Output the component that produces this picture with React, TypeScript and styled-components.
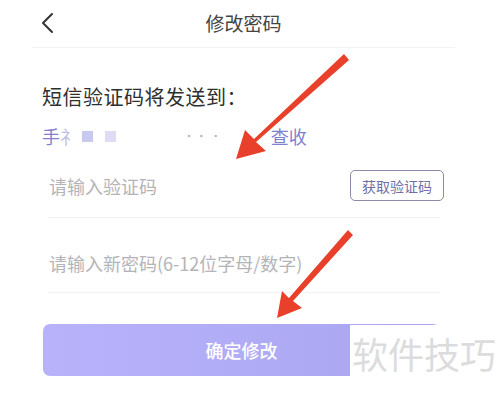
import React from "react";
import styled, { createGlobalStyle } from "styled-components";

const GlobalStyle = createGlobalStyle`
  html, body {
    margin: 0;
    padding: 0;
    background: #ffffff;
  }
  * {
    box-sizing: border-box;
  }
`;

const FONT = `"Noto Sans CJK SC", "Noto Sans", Roboto, sans-serif`;

const ResetPasswordPage = (): React.ReactElement => {
  return (
    <>
      <GlobalStyle />
      <StyledScreen>
        <StyledHeader>
          <StyledBackButton aria-label="back">
            <svg width="16" height="22" viewBox="0 0 16 22">
              <polyline
                points="12,2 3,11 12,20"
                fill="none"
                stroke="#333"
                strokeWidth="2"
                strokeLinecap="round"
                strokeLinejoin="round"
              />
            </svg>
          </StyledBackButton>
          <StyledTitle>修改密码</StyledTitle>
        </StyledHeader>

        <StyledBody>
          <StyledHeading>短信验证码将发送到：</StyledHeading>
          <StyledPhone>
            <span>手</span>
            <StyledBlur>礻</StyledBlur>
            <StyledMask $tone="#c9c8ef" />
            <StyledMask $tone="#dedcf5" />
            <StyledDots>· ·  ·</StyledDots>
            <StyledTail>查收</StyledTail>
          </StyledPhone>

          <StyledField $align="center" $height={70}>
            <StyledPlaceholder>请输入验证码</StyledPlaceholder>
            <StyledCodeButton>获取验证码</StyledCodeButton>
          </StyledField>

          <StyledField $align="flex-end" $height={75}>
            <StyledPlaceholder>请输入新密码(6-12位字母/数字)</StyledPlaceholder>
          </StyledField>

          <StyledSubmit>确定修改</StyledSubmit>
        </StyledBody>

        <StyledArrows width="500" height="398" viewBox="0 0 500 398">
          <path d="M344 54 L349 60 L256 142 L266 151 L236 159 L245 130 L254 139 Z" fill="#e8402a" />
          <path d="M348 230 L353 235 L293 301 L302 308 L277 318 L282 291 L289 298 Z" fill="#e8402a" />
        </StyledArrows>

        <StyledWatermark>软件技巧</StyledWatermark>
      </StyledScreen>
    </>
  );
};

export default ResetPasswordPage;

const StyledScreen = styled.div`
  position: relative;
  width: 500px;
  height: 398px;
  overflow: hidden;
  background: #ffffff;
  font-family: ${FONT};
  display: flex;
  flex-direction: column;
`;

const StyledHeader = styled.div`
  height: 48px;
  margin: 0 45px 0 32px;
  border-bottom: 1px solid #f3f3f5;
  display: flex;
  align-items: center;
  justify-content: center;
  position: relative;
`;

const StyledBackButton = styled.div`
  position: absolute;
  left: 8px;
  top: 12px;
  width: 16px;
  height: 22px;
  display: flex;
`;

const StyledTitle = styled.div`
  font-size: 19px;
  line-height: 24px;
  color: #444444;
  margin-top: -2px;
`;

const StyledBody = styled.div`
  padding: 0 60px 0 42px;
  display: flex;
  flex-direction: column;
`;

const StyledHeading = styled.div`
  margin-top: 35px;
  font-size: 20px;
  line-height: 28px;
  color: #2f2f2f;
  letter-spacing: 0.5px;
`;

const StyledPhone = styled.div`
  margin-top: 13px;
  height: 24px;
  display: flex;
  align-items: center;
  font-size: 18px;
  line-height: 24px;
  color: #7f80cf;
`;

const StyledBlur = styled.span`
  opacity: 0.5;
  margin-right: 4px;
`;

const StyledMask = styled.span<{ $tone: string }>`
  width: 11px;
  height: 11px;
  background: ${(p) => p.$tone};
  margin-right: 12px;
`;

const StyledDots = styled.span`
  margin-left: 56px;
  font-size: 10px;
  color: #aaaaaa;
  white-space: pre;
`;

const StyledTail = styled.span`
  margin-left: 50px;
`;

const StyledField = styled.div<{ $align: string; $height: number }>`
  margin-left: 6px;
  height: ${(p) => p.$height}px;
  padding-bottom: ${(p) => (p.$align === "flex-end" ? 17 : 0)}px;
  padding-top: ${(p) => (p.$align === "center" ? 6 : 0)}px;
  display: flex;
  align-items: ${(p) => p.$align};
  justify-content: space-between;
  border-bottom: 1px solid #f2f2f4;
`;

const StyledPlaceholder = styled.span`
  font-size: 18px;
  line-height: 24px;
  color: #b4b4b8;
  padding-left: 1px;
`;

const StyledCodeButton = styled.div`
  width: 94px;
  height: 31px;
  margin-right: -4px;
  border: 1.5px solid #8a8ba4;
  border-radius: 5px;
  display: flex;
  align-items: center;
  justify-content: center;
  font-size: 14px;
  color: #6f70a8;
`;

const StyledSubmit = styled.div`
  margin-top: 31px;
  margin-left: 1px;
  height: 52px;
  border-radius: 7px;
  background: linear-gradient(90deg, #b8b2fb 0%, #b1acf6 50%, #a8a4ef 100%);
  display: flex;
  align-items: center;
  justify-content: center;
  font-size: 18px;
  font-weight: 500;
  color: #ffffff;
`;

const StyledArrows = styled.svg`
  position: absolute;
  left: 0;
  top: 0;
  pointer-events: none;
`;

const StyledWatermark = styled.div`
  position: absolute;
  left: 350px;
  top: 325px;
  width: 150px;
  height: 73px;
  background: #ffffff;
  padding-top: 6px;
  padding-left: 2px;
  font-size: 36px;
  line-height: 44px;
  color: #dcdcdc;
  white-space: nowrap;
`;
